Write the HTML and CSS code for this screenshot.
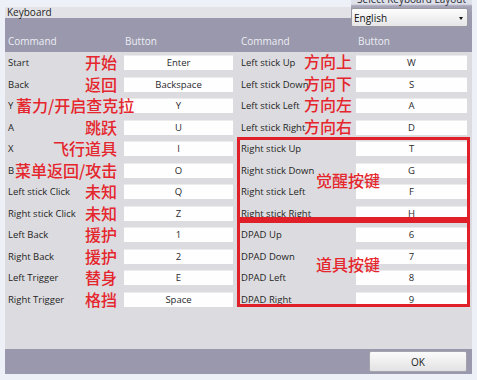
FILE: index.html
```html
<!DOCTYPE html>
<html lang="zh-CN">
<head>
<meta charset="utf-8">
<title>Keyboard</title>
<link rel="stylesheet" href="styles.css">
</head>
<body>
<div class="window">
  <div class="titlebar">
    <div class="title">Keyboard</div>
  </div>
  <div class="layout-picker">
    <div class="picker-label">Select Keyboard Layout</div>
    <div class="dropdown"><span>English</span><span class="arrow"></span></div>
  </div>
  <div class="band header">
    <div class="hcol hcol-left"><span>Command</span><span>Button</span></div>
    <div class="hcol hcol-right"><span>Command</span><span>Button</span></div>
  </div>
  <div class="columns">
    <div class="col col-left">
      <div class="row"><span class="cmd">Start</span><span class="key">Enter</span><span class="note">开始</span></div>
      <div class="row"><span class="cmd">Back</span><span class="key">Backspace</span><span class="note">返回</span></div>
      <div class="row"><span class="cmd">Y</span><span class="key">Y</span><span class="note note-y">蓄力/开启查克拉</span></div>
      <div class="row"><span class="cmd">A</span><span class="key">U</span><span class="note">跳跃</span></div>
      <div class="row"><span class="cmd">X</span><span class="key">I</span><span class="note">飞行道具</span></div>
      <div class="row"><span class="cmd">B</span><span class="key">O</span><span class="note note-b">菜单返回/攻击</span></div>
      <div class="row"><span class="cmd">Left stick Click</span><span class="key">Q</span><span class="note">未知</span></div>
      <div class="row"><span class="cmd">Right stick Click</span><span class="key">Z</span><span class="note">未知</span></div>
      <div class="row"><span class="cmd">Left Back</span><span class="key">1</span><span class="note">援护</span></div>
      <div class="row"><span class="cmd">Right Back</span><span class="key">2</span><span class="note">援护</span></div>
      <div class="row"><span class="cmd">Left Trigger</span><span class="key">E</span><span class="note">替身</span></div>
      <div class="row"><span class="cmd">Right Trigger</span><span class="key">Space</span><span class="note">格挡</span></div>
    </div>
    <div class="col col-right">
      <div class="row"><span class="cmd">Left stick Up</span><span class="key">W</span><span class="note">方向上</span></div>
      <div class="row"><span class="cmd">Left stick Down</span><span class="key">S</span><span class="note">方向下</span></div>
      <div class="row"><span class="cmd">Left stick Left</span><span class="key">A</span><span class="note">方向左</span></div>
      <div class="row"><span class="cmd">Left stick Right</span><span class="key">D</span><span class="note">方向右</span></div>
      <div class="group group-awaken">
        <div class="row"><span class="cmd">Right stick Up</span><span class="key">T</span></div>
        <div class="row"><span class="cmd">Right stick Down</span><span class="key">G</span></div>
        <div class="row"><span class="cmd">Right stick Left</span><span class="key">F</span></div>
        <div class="row"><span class="cmd">Right stick Right</span><span class="key">H</span></div>
        <span class="group-note">觉醒按键</span>
      </div>
      <div class="group group-items">
        <div class="row"><span class="cmd">DPAD Up</span><span class="key">6</span></div>
        <div class="row"><span class="cmd">DPAD Down</span><span class="key">7</span></div>
        <div class="row"><span class="cmd">DPAD Left</span><span class="key">8</span></div>
        <div class="row"><span class="cmd">DPAD Right</span><span class="key">9</span></div>
        <span class="group-note">道具按键</span>
      </div>
    </div>
  </div>
  <div class="spacer"></div>
  <div class="band footer">
    <button class="ok">OK</button>
  </div>
</div>
</body>
</html>
```

FILE: styles.css
```css
html, body {
  margin: 0;
  padding: 0;
  background: #edf1f7;
}

body {
  font-family: "Open Sans", "Noto Sans", sans-serif;
  font-size: 9.5px;
  color: #222;
  width: 477px;
  height: 380px;
  overflow: hidden;
}

.window {
  position: relative;
  margin-left: 5px;
  width: 467px;
  background: #dcdce0;
}

.titlebar {
  height: 18px;
  background: #edf1f7;
  display: flex;
  align-items: flex-end;
}

.title {
  width: 346px;
  height: 11px;
  line-height: 11px;
  background: #e3e3e7;
  padding-left: 2px;
  font-size: 10px;
  color: #1e1e24;
}

.layout-picker {
  position: absolute;
  top: 0;
  right: 0;
  width: 121px;
  height: 18px;
  background: linear-gradient(#dfe1ea 0, #dfe1ea 4px, #a6a4b6 6px, #9a98ac 100%);
}

.picker-label {
  margin-top: -6px;
  line-height: 10px;
  font-size: 10px;
  text-align: center;
  color: #2a2a33;
}

.dropdown {
  position: absolute;
  top: 8px;
  left: 0;
  width: 117px;
  height: 19px;
  border: 1px solid #9a9aa4;
  border-radius: 2px;
  background: linear-gradient(#fdfdfd, #e6e6e8);
  display: flex;
  align-items: center;
  justify-content: space-between;
  padding: 0 4px 0 2px;
  box-sizing: border-box;
  font-size: 10px;
  color: #111;
}

.arrow {
  width: 0;
  height: 0;
  border-left: 2.5px solid transparent;
  border-right: 2.5px solid transparent;
  border-top: 3px solid #111;
  margin-top: 1px;
}

.band {
  background: #9a98ac;
}

.header {
  height: 34px;
  display: grid;
  grid-template-columns: 232px 235px;
  align-items: end;
  color: #eceef4;
  font-size: 10px;
}

.hcol {
  display: grid;
  height: 14px;
  line-height: 14px;
  padding-bottom: 4px;
}

.hcol-left {
  grid-template-columns: 117px 1fr;
  padding-left: 3px;
}

.hcol-right {
  grid-template-columns: 117px 1fr;
  padding-left: 4px;
}

.columns {
  display: grid;
  grid-template-columns: 232px 235px;
}

.row {
  position: relative;
  display: grid;
  align-items: center;
  height: 21.5px;
}

.col-left .row {
  grid-template-columns: 116px 109px;
  padding-left: 3px;
}

.col-right .row {
  grid-template-columns: 115px 111px;
  padding-left: 4px;
}

.cmd {
  white-space: nowrap;
  color: #1f1f24;
}

.key {
  height: 15px;
  line-height: 15px;
  background: #fefefe;
  box-shadow: inset 0 1px 0 #ececee;
  text-align: center;
  color: #2a2a2e;
}

.note,
.group-note {
  position: absolute;
  font-family: "Noto Sans CJK SC", sans-serif;
  font-size: 16px;
  font-weight: 500;
  line-height: 16px;
  color: #e5262d;
  white-space: nowrap;
}

.note {
  right: 120px;
  top: 2px;
}

.col-right .note {
  top: 1px;
}

.note-y {
  right: auto;
  left: 11px;
}

.note-b {
  right: auto;
  left: 10px;
}

.group {
  position: relative;
}

.group::after {
  content: "";
  position: absolute;
  left: 0;
  right: 2px;
  border: 3px solid #e01f28;
  pointer-events: none;
}

.group-awaken::after {
  top: -1px;
  bottom: 4px;
}

.group-items::after {
  top: -4px;
  bottom: 3px;
}

.group-note {
  left: 79px;
}

.group-awaken .group-note {
  top: 34px;
}

.group-items .group-note {
  top: 32px;
}

.spacer {
  height: 39px;
}

.footer {
  height: 25px;
  display: flex;
  justify-content: flex-end;
  align-items: flex-start;
  padding-right: 5px;
}

.ok {
  margin-top: 2px;
  width: 98px;
  height: 21px;
  border: 1px solid #a4a4ac;
  border-radius: 2px;
  background: linear-gradient(#fbfbfb, #e2e2e4);
  font-family: "Open Sans", "Noto Sans", sans-serif;
  font-size: 10px;
  color: #222;
  padding: 0;
}
```
